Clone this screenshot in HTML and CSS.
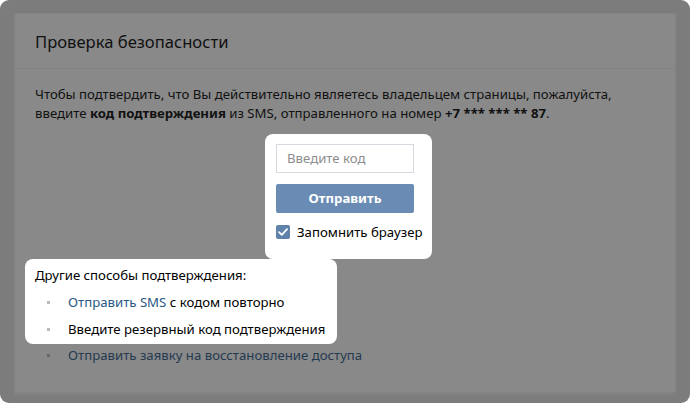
FILE: index.html
```html
<!DOCTYPE html>
<html lang="ru">
<head>
<meta charset="utf-8">
<link rel="stylesheet" href="styles.css">
</head>
<body>
<div class="frame">
  <div class="card">
    <div class="card-header">Проверка безопасности</div>
    <div class="card-body">
      <p class="intro"><span>Чтобы подтвердить, что Вы действительно являетесь владельцем страницы, пожалуйста,</span> <span>введите</span> <b>код подтверждения</b> <span>из SMS, отправленного на номер</span> <b>+7 *** *** ** 87</b><span>.</span></p>
      <div class="form-spot">
        <div class="form">
          <div class="input">Введите код</div>
          <div class="button">Отправить</div>
          <label class="remember">
            <span class="checkbox"><svg width="10" height="8" viewBox="0 0 10 8"><path d="M1 4.2 L3.8 6.8 L9 1.2" fill="none" stroke="#fff" stroke-width="1.8" stroke-linecap="round" stroke-linejoin="round"/></svg></span>
            <span class="remember-text">Запомнить браузер</span>
          </label>
        </div>
      </div>
      <div class="other-spot">
        <div class="other-title">Другие способы подтверждения:</div>
        <ul class="ways">
          <li><a class="link">Отправить SMS</a> <span>с кодом повторно</span></li>
          <li>Введите резервный код подтверждения</li>
        </ul>
      </div>
      <ul class="ways ways-dim">
        <li><a class="link-dim">Отправить заявку на восстановление доступа</a></li>
      </ul>
    </div>
  </div>
</div>
</body>
</html>
```
FILE: styles.css
```css
html, body {
  margin: 0;
  padding: 0;
  background: #ffffff;
}
body {
  font-family: "Noto Sans", "Open Sans", "Liberation Sans", sans-serif;
  font-size: 13.2px;
  color: #000;
}
.frame {
  width: 690px;
  height: 403px;
  box-sizing: border-box;
  background: #7c7c7d;
  border-radius: 9px;
  padding: 13px 14px 0 14px;
}
.card {
  height: 380px;
  box-sizing: border-box;
  background: #898989;
  border: 1px solid #838384;
  box-shadow: 0 1px 0 #828283, 0 3px 0 #7f7f80;
}
.card-header {
  height: 55px;
  box-sizing: border-box;
  border-bottom: 1px solid #838384;
  padding: 18px 20px 0 20px;
  font-size: 16.6px;
  line-height: 20px;
  color: #111;
}
.card-body {
  padding: 16px 20px 0 20px;
}
.intro {
  margin: 0;
  line-height: 19px;
  color: #111;
}
.intro b {
  font-weight: 700;
}
.form-spot {
  margin-top: 11px;
  margin-left: calc(50% - 80px);
  width: 167px;
  box-sizing: border-box;
  background: #fff;
  border-radius: 8px;
  padding: 10px 10px 10px 11px;
  height: 125px;
}
.form {
  width: 138px;
}
.input {
  height: 29px;
  box-sizing: border-box;
  border: 1px solid #d3d9de;
  padding: 0 10px;
  line-height: 27px;
  color: #8d8d8d;
}
.button {
  margin-top: 11px;
  height: 29px;
  background: #6a8cb4;
  border-radius: 2px;
  color: #fff;
  font-weight: 700;
  text-align: center;
  line-height: 29px;
}
.remember {
  display: flex;
  align-items: center;
  margin-top: 11px;
  white-space: nowrap;
  gap: 7px;
  height: 16px;
}
.checkbox {
  width: 14px;
  height: 14px;
  border-radius: 2px;
  background: #5f82aa;
  display: flex;
  align-items: center;
  justify-content: center;
  flex: none;
}
.remember-text {
  color: #000;
}
.other-spot {
  margin-left: -10px;
  width: 312px;
  box-sizing: border-box;
  background: #fff;
  border-radius: 8px;
  padding: 7px 10px 6px 10px;
}
.other-title {
  line-height: 18px;
}
.ways {
  list-style: none;
  margin: 0;
  padding: 0;
}
.ways li {
  position: relative;
  padding-left: 33px;
  line-height: 18px;
  margin-top: 9px;
}
.ways li::before {
  content: "";
  position: absolute;
  left: 12px;
  top: 8px;
  width: 3px;
  height: 3px;
  background: #b5bcc4;
}
.link {
  color: #2a5885;
  text-decoration: none;
}
.ways-dim li {
  margin-top: 2px;
}
.ways-dim li::before {
  background: #666a6e;
}
.link-dim {
  color: #253a50;
}
```
